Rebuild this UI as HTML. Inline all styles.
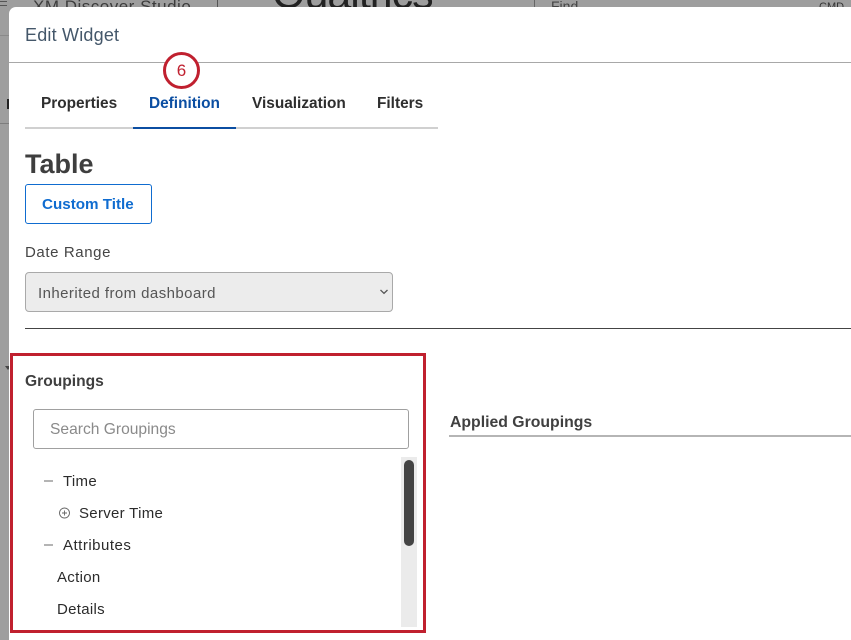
<!DOCTYPE html>
<html><head><meta charset="utf-8">
<style>
html,body{margin:0;padding:0;width:851px;height:640px;overflow:hidden;background:#9e9e9e;font-family:"Liberation Sans",sans-serif;}
.a{position:absolute;white-space:nowrap;}
#modal{position:absolute;left:9px;top:7px;width:842px;height:633px;background:#fff;border-top-left-radius:7px;}
.tab{font-size:15.4px;font-weight:bold;color:#2e2e2e;top:93.5px;line-height:20px;}
.tree{font-size:15px;color:#2b2b2b;line-height:20px;letter-spacing:.3px;}
.dash{width:9px;height:2px;background:#b4b4b4;}
</style></head><body>
<div class="a" style="left:0;top:35px;width:9px;height:1px;background:#8a8a8a"></div>
<div class="a" style="left:0;top:123px;width:9px;height:1px;background:#7d7d7d"></div>
<div class="a" style="left:7px;top:99px;width:2px;height:10px;background:#222"></div>
<div class="a" style="left:0;top:1px;width:7px;height:1px;background:#555"></div>
<div class="a" style="left:0;top:5px;width:7px;height:1px;background:#555"></div>
<div class="a" style="left:33px;top:-2px;font-size:17px;line-height:18px;color:#3c3c3c;letter-spacing:.5px">XM Discover Studio</div>
<div class="a" style="left:217px;top:0;width:1px;height:7px;background:#555"></div>
<div class="a" style="left:534px;top:0;width:1px;height:7px;background:#666"></div>
<div class="a" style="left:272px;top:-29px;font-size:43px;line-height:46px;color:#222;letter-spacing:-1px">Qualtrics</div>
<div class="a" style="left:551px;top:-3px;font-size:14px;line-height:18px;color:#444">Find</div>
<div class="a" style="left:819px;top:0;font-size:11px;line-height:14px;color:#333">CMD</div>
<div class="a" style="left:5px;top:366px;width:0;height:0;border-left:3px solid transparent;border-right:3px solid transparent;border-top:4px solid #444"></div>

<div id="modal"></div>
<div class="a" style="left:25px;top:23.5px;font-size:18px;line-height:22px;color:#44576a;letter-spacing:.2px">Edit Widget</div>
<div class="a" style="left:9px;top:62px;width:842px;height:1px;background:#a8a8a8"></div>

<div class="a" style="left:163px;top:52px;width:31px;height:31px;border:3px solid #c0202f;border-radius:50%;background:#fff"></div>
<div class="a" style="left:163px;top:61px;width:37px;text-align:center;font-size:17px;line-height:20px;color:#c0202f">6</div>

<div class="a tab" style="left:41px">Properties</div>
<div class="a tab" style="left:149px;color:#0b4ea2">Definition</div>
<div class="a tab" style="left:252px">Visualization</div>
<div class="a tab" style="left:377px">Filters</div>
<div class="a" style="left:25px;top:127px;width:413px;height:2px;background:#d0d0d0"></div>
<div class="a" style="left:133px;top:127px;width:103px;height:2px;background:#0b4ea2"></div>

<div class="a" style="left:25px;top:148px;font-size:27px;line-height:32px;font-weight:bold;color:#3e3e3e">Table</div>
<div class="a" style="left:25px;top:184px;width:125px;height:38px;border:1px solid #0f6cd0;border-radius:3px;background:#fff"></div>
<div class="a" style="left:42px;top:195px;font-size:15.2px;line-height:20px;font-weight:bold;color:#0f6cd0">Custom Title</div>

<div class="a" style="left:25px;top:243px;font-size:15px;line-height:20px;color:#454545;letter-spacing:.6px">Date Range</div>
<div class="a" style="left:25px;top:272px;width:366px;height:38px;border:1px solid #a9a9a9;border-radius:4px;background:#ececec"></div>
<div class="a" style="left:38px;top:284px;font-size:15px;line-height:20px;color:#555;letter-spacing:.43px">Inherited from dashboard</div>
<svg class="a" style="left:379px;top:288px" width="10" height="8" viewBox="0 0 10 8"><path d="M1.5 2L5 5.3L8.5 2" fill="none" stroke="#555" stroke-width="1.3"/></svg>
<div class="a" style="left:25px;top:328px;width:826px;height:1px;background:#444"></div>

<div class="a" style="left:10px;top:353px;width:410px;height:274px;border:3px solid #c0202f;background:#fff"></div>
<div class="a" style="left:25px;top:372px;font-size:15.6px;line-height:20px;font-weight:bold;color:#3f3f3f">Groupings</div>
<div class="a" style="left:33px;top:409px;width:374px;height:38px;border:1px solid #a0a0a0;border-radius:3px;background:#fff"></div>
<div class="a" style="left:50px;top:420px;font-size:15.6px;line-height:20px;color:#8a8a8a">Search Groupings</div>

<div class="a" style="left:401px;top:457px;width:16px;height:170px;background:#ebebeb"></div>
<div class="a" style="left:404px;top:460px;width:10px;height:86px;background:#444;border-radius:5px"></div>

<div class="a dash" style="left:44px;top:480px"></div>
<div class="a tree" style="left:63px;top:472px">Time</div>
<svg class="a" style="left:58px;top:507px" width="13" height="13" viewBox="0 0 13 13"><circle cx="6.5" cy="6" r="5" fill="none" stroke="#666" stroke-width=".9"/><path d="M6.5 3.5V8.5M4 6H9" stroke="#666" stroke-width=".9"/></svg>
<div class="a tree" style="left:79px;top:504px">Server Time</div>
<div class="a dash" style="left:44px;top:544px"></div>
<div class="a tree" style="left:63px;top:536px;letter-spacing:.5px">Attributes</div>
<div class="a tree" style="left:57px;top:568px">Action</div>
<div class="a tree" style="left:57px;top:600px">Details</div>

<div class="a" style="left:450px;top:413px;font-size:15.8px;line-height:20px;font-weight:bold;color:#404040">Applied Groupings</div>
<div class="a" style="left:449px;top:435px;width:402px;height:2px;background:#b5b5b5"></div>
</body></html>
